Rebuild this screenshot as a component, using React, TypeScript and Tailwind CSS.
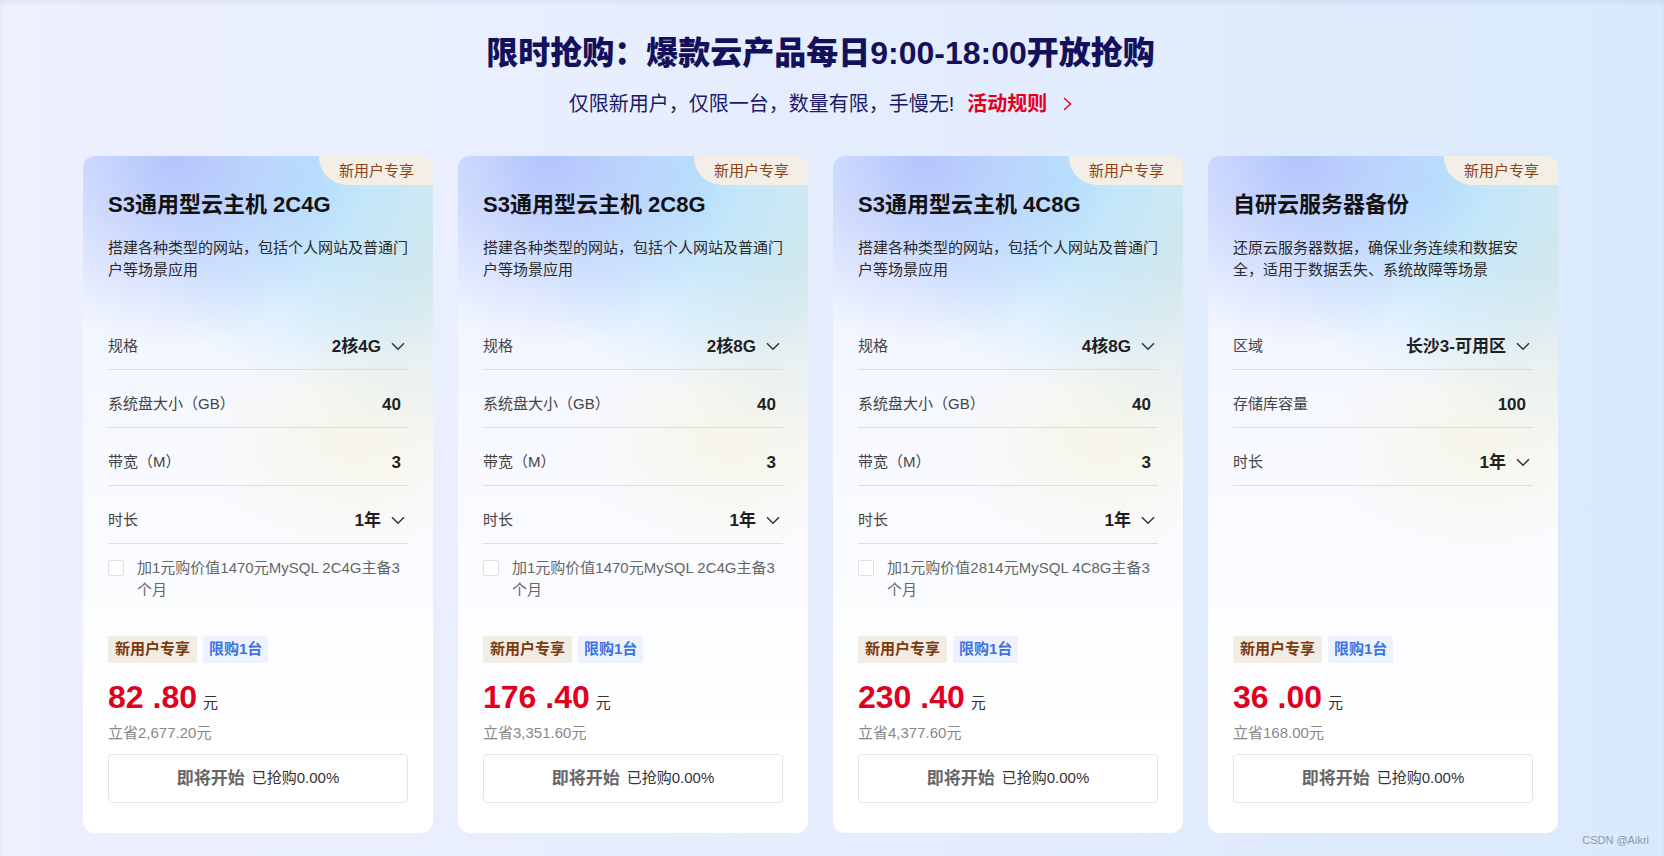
import React from "react";

type Row = { label: string; value: string; select?: boolean };

type Product = {
  title: string;
  desc: string;
  rows: Row[];
  addon?: string;
  price: string;
  save: string;
};

const products: Product[] = [
  {
    title: "S3通用型云主机 2C4G",
    desc: "搭建各种类型的网站，包括个人网站及普通门户等场景应用",
    rows: [
      { label: "规格", value: "2核4G", select: true },
      { label: "系统盘大小（GB）", value: "40" },
      { label: "带宽（M）", value: "3" },
      { label: "时长", value: "1年", select: true },
    ],
    addon: "加1元购价值1470元MySQL 2C4G主备3个月",
    price: "82 .80",
    save: "立省2,677.20元",
  },
  {
    title: "S3通用型云主机 2C8G",
    desc: "搭建各种类型的网站，包括个人网站及普通门户等场景应用",
    rows: [
      { label: "规格", value: "2核8G", select: true },
      { label: "系统盘大小（GB）", value: "40" },
      { label: "带宽（M）", value: "3" },
      { label: "时长", value: "1年", select: true },
    ],
    addon: "加1元购价值1470元MySQL 2C4G主备3个月",
    price: "176 .40",
    save: "立省3,351.60元",
  },
  {
    title: "S3通用型云主机 4C8G",
    desc: "搭建各种类型的网站，包括个人网站及普通门户等场景应用",
    rows: [
      { label: "规格", value: "4核8G", select: true },
      { label: "系统盘大小（GB）", value: "40" },
      { label: "带宽（M）", value: "3" },
      { label: "时长", value: "1年", select: true },
    ],
    addon: "加1元购价值2814元MySQL 4C8G主备3个月",
    price: "230 .40",
    save: "立省4,377.60元",
  },
  {
    title: "自研云服务器备份",
    desc: "还原云服务器数据，确保业务连续和数据安全，适用于数据丢失、系统故障等场景",
    rows: [
      { label: "区域", value: "长沙3-可用区", select: true },
      { label: "存储库容量", value: "100" },
      { label: "时长", value: "1年", select: true },
    ],
    price: "36 .00",
    save: "立省168.00元",
  },
];

function Chevron() {
  return (
    <svg width="14" height="9" viewBox="0 0 14 9" fill="none" className="ml-[10px] mr-[3px]">
      <path d="M1 1.2 L7 7.2 L13 1.2" stroke="#333" strokeWidth="1.5" />
    </svg>
  );
}

function Card({ p }: { p: Product }) {
  return (
    <div className="relative flex flex-col rounded-[12px] px-[25px] pb-[30px] pt-[34px] bg-[radial-gradient(ellipse_55%_28%_at_26%_0%,rgba(176,194,252,0.95),transparent),radial-gradient(ellipse_55%_30%_at_66%_4%,rgba(182,228,252,0.95),transparent),radial-gradient(ellipse_45%_30%_at_98%_14%,rgba(214,231,228,0.9),transparent),radial-gradient(ellipse_45%_18%_at_78%_42%,rgba(247,245,230,0.9),transparent),linear-gradient(180deg,#eaf1ff_0%,#f7f9ff_42%,#ffffff_85%)]">
      <div className="absolute right-0 top-0 flex h-[29px] items-center rounded-tr-[12px] rounded-bl-[28px] bg-[#f3eee6] pl-[20px] pr-[19px] text-[15px] leading-none text-[#8a4316]">
        新用户专享
      </div>

      <h3 className="text-[22px] font-bold leading-[30px] text-[#111]">{p.title}</h3>
      <p className="mt-[17px] w-[302px] text-[15px] leading-[22px] text-[#2a2a2a]">{p.desc}</p>

      <div className="mt-[31px]">
        {p.rows.map((r) => (
          <div
            key={r.label}
            className="flex h-[58px] items-center justify-between border-b border-[#dcdde2] pt-[12px]"
          >
            <span className="text-[15px] text-[#444]">{r.label}</span>
            <span className={`flex items-center text-[17px] font-bold text-[#1f1f1f] ${r.select ? "" : "pr-[7px]"}`}>
              {r.value}
              {r.select && <Chevron />}
            </span>
          </div>
        ))}
      </div>

      {p.addon && (
        <div className="mt-[13px] flex items-start">
          <span className="mt-[3px] h-[16px] w-[16px] shrink-0 rounded-[2px] border border-[#dcdfe6] bg-white" />
          <span className="ml-[13px] text-[15px] leading-[22px] text-[#666]">{p.addon}</span>
        </div>
      )}

      <div className="mt-auto pt-[35px]">
        <div className="flex gap-[6px]">
          <span className="flex h-[27px] items-center rounded-[2px] bg-[#f1ece4] px-[7px] text-[15px] font-bold text-[#7a3a0d]">
            新用户专享
          </span>
          <span className="flex h-[27px] items-center rounded-[2px] bg-[#edf2fc] px-[6px] text-[15px] font-bold text-[#3d72e0]">
            限购1台
          </span>
        </div>
        <div className="mt-[14px] flex h-[40px] items-baseline">
          <span className="text-[32px] font-bold leading-[40px] text-[#e2001f]">{p.price}</span>
          <span className="ml-[6px] text-[15px] leading-[20px] text-[#333]">元</span>
        </div>
        <div className="mt-[5px] text-[15px] leading-[22px] text-[#888]">{p.save}</div>
        <div className="mt-[10px] flex h-[49px] items-center justify-center rounded-[4px] border border-[#e4e5e8] bg-white">
          <span className="text-[17px] font-bold text-[#666]">即将开始</span>
          <span className="ml-[7px] text-[15px] text-[#333]">已抢购0.00%</span>
        </div>
      </div>
    </div>
  );
}

export default function App() {
  return (
    <main className="relative min-h-screen overflow-hidden bg-[linear-gradient(90deg,#edf0fe_0%,#e4edfd_55%,#d9e9fc_100%)] font-['Liberation_Sans','Noto_Sans_CJK_SC',sans-serif] shadow-[inset_0_3px_4px_rgba(0,0,40,0.05)]">
      <div className="ml-[83px] w-[1475px] pt-[31px]">
        {/* HEADER */}
        <section className="text-center">
          <h1 className="text-[32px] font-black leading-[44px] text-[#15105c]">
            限时抢购：爆款云产品每日9:00-18:00开放抢购
          </h1>
          <p className="mt-[16px] flex items-center justify-center text-[20px] leading-[26px] text-[#1c1a66]">
            <span>仅限新用户，仅限一台，数量有限，手慢无!</span>
            <span className="ml-[13px] font-bold text-[#e3001e]">活动规则</span>
            <svg width="9" height="14" viewBox="0 0 9 14" fill="none" className="ml-[16px]">
              <path d="M1 1 L7.5 7 L1 13" stroke="#e3001e" strokeWidth="1.4" />
            </svg>
          </p>
        </section>

        {/* CARDS */}
        <section className="mt-[39px] grid grid-cols-4 gap-[25px]">
          {products.map((p) => (
            <Card key={p.title} p={p} />
          ))}
        </section>
      </div>

      <div className="absolute bottom-[8px] right-[15px] text-[11px] text-[#8e96a3]">CSDN @Aikri</div>
    </main>
  );
}
